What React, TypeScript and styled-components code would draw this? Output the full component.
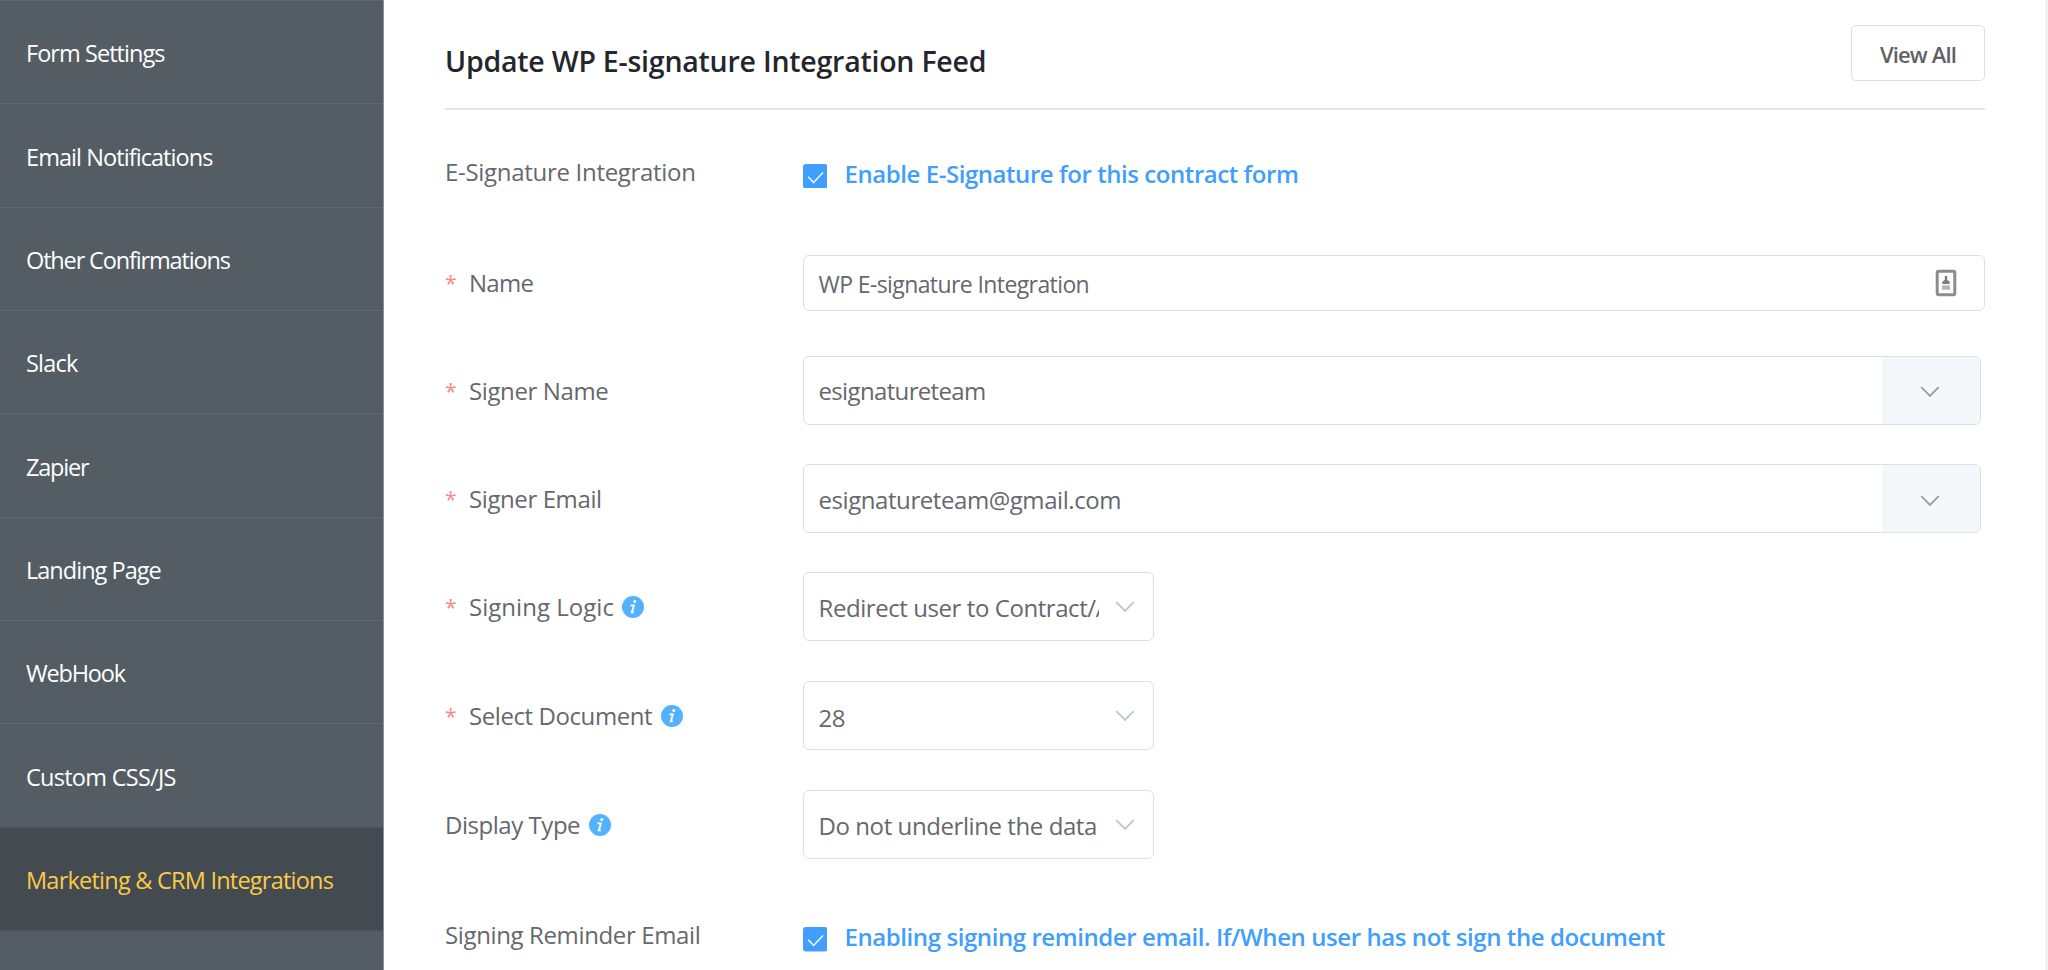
import React from "react";
import styled, { createGlobalStyle } from "styled-components";

const GlobalStyle = createGlobalStyle`
  *, *::before, *::after { box-sizing: border-box; }
  html, body { margin: 0; padding: 0; overflow: hidden; background: #fff; }
  body { font-family: "Open Sans", "Noto Sans", sans-serif; font-size: 24px; color: #66686c; }
`;

const Page = styled.div`
  display: flex;
  width: 2048px;
  height: 970px;
  overflow: hidden;
  background: #fff;
`;

const Sidebar = styled.nav`
  flex: none;
  width: 384px;
  background: #555d64;
  border-right: 1px solid #87929b;
`;

const NavItem = styled.a<{ $active?: boolean; $plain?: boolean }>`
  display: flex;
  align-items: center;
  height: 103.35px;
  padding: 2px 0 0 26px;
  border-top: 1px solid ${(p) => (p.$active || p.$plain ? "#4d555b" : "#616970")};
  background: ${(p) => (p.$active ? "#444b50" : "transparent")};
  color: ${(p) => (p.$active ? "#fcca46" : "#fff")};
  font-size: 23.5px;
  white-space: nowrap;
`;

const Main = styled.main`
  flex: 1;
  padding: 0 60px 0 61px;
  border-right: 3px solid #f1f1f1;
`;

const Header = styled.header`
  display: flex;
  justify-content: space-between;
  align-items: flex-start;
  height: 110px;
  padding-top: 25px;
  border-bottom: 2px solid #e3e3e5;
`;

const Title = styled.h2`
  margin: 0;
  padding-top: 15.5px;
  line-height: 40px;
  font-size: 28.5px;
  font-weight: 600;
  color: #23272c;
  white-space: nowrap;
`;

const Button = styled.button`
  width: 134px;
  height: 56px;
  padding: 1px 0 0;
  border: 1px solid #dcdfe6;
  border-radius: 5px;
  background: #fff;
  color: #606266;
  font: 600 22px/1 "Open Sans", "Noto Sans", sans-serif;
`;

const Form = styled.form`
  display: flex;
  flex-direction: column;
`;

const Row = styled.div<{ $h: number; $gap: number }>`
  display: grid;
  grid-template-columns: 357.5px 1fr;
  grid-template-rows: 100%;
  align-items: center;
  height: ${(p) => p.$h}px;
  margin-top: ${(p) => p.$gap}px;
`;

const Label = styled.label<{ $lift?: number }>`
  display: flex;
  align-items: center;
  padding-bottom: ${(p) => p.$lift ?? 0}px;
  line-height: 34px;
  white-space: nowrap;
`;

const Star = styled.span`
  width: 24px;
  color: #f78989;
  font-size: 21px;
`;

const Track = styled.span<{ $ls: number }>`
  letter-spacing: ${(p) => p.$ls}px;
`;

const InfoIcon = styled.svg`
  width: 22px;
  height: 22px;
  margin-left: 8.5px;
`;

const Check = styled.div`
  display: flex;
  align-items: center;
  color: #409eff;
  font-weight: 600;
  white-space: nowrap;
`;

const CheckText = styled.span`
  margin-left: 17.5px;
  line-height: 34px;
  padding-bottom: 4px;
`;

const Field = styled.div<{ $w: string }>`
  display: flex;
  width: ${(p) => p.$w};
  height: 100%;
  border: 1px solid #dcdfe6;
  border-radius: 6px;
  overflow: hidden;
  background: #fff;
  padding-left: 15px;
`;

const Value = styled.div<{ $drop?: number; $size?: number }>`
  flex: 1;
  align-self: center;
  overflow: hidden;
  line-height: 34px;
  font-size: ${(p) => p.$size ?? 24}px;
  padding-top: ${(p) => p.$drop ?? 0}px;
  white-space: nowrap;
`;

const Append = styled.div<{ $drop?: number }>`
  display: flex;
  align-items: center;
  justify-content: center;
  width: 98px;
  padding: ${(p) => p.$drop ?? 0}px 2px 0 0;
  background: #f5f7fa;
`;

const Suffix = styled.div<{ $w: number }>`
  display: flex;
  align-items: center;
  justify-content: center;
  flex: none;
  width: ${(p) => p.$w}px;
  padding-right: 2px;
`;

const Info = () => (
  <InfoIcon viewBox="0 0 22 22">
    <circle cx="11" cy="11" r="11" fill="#53b2ff" />
    <circle cx="12.8" cy="5.4" r="1.5" fill="#fff" />
    <path d="M8.4 9.4h3.4L9.9 16.4h1.9" fill="none" stroke="#fff" strokeWidth="1.9" />
  </InfoIcon>
);

const Chevron = ({ color }: { color: string }) => (
  <svg width="20" height="12" viewBox="0 0 20 12" fill="none">
    <path d="M1.3 1.2 10 10l8.7-8.8" stroke={color} strokeWidth="1.8" />
  </svg>
);

const CheckBox = () => (
  <svg width="24.5" height="24.5" viewBox="0 0 24.5 24.5">
    <rect width="24.5" height="24.5" rx="3" fill="#409eff" />
    <path d="M5.2 12.8 10.6 18.4 20 8.4" fill="none" stroke="#fff" strokeWidth="1.4" />
  </svg>
);

const AutofillIcon = () => (
  <svg width="22" height="28" viewBox="0 0 22 28">
    <rect x="2.2" y="2.2" width="17.6" height="23.6" rx="1.5" fill="#fdfdfd" stroke="#8c8c8c" strokeWidth="3" />
    <path d="M9.8 7h2.4v4l2.4 1.4v2.6H7.4v-2.6L9.8 11z" fill="#7b7b7b" />
    <rect x="7" y="16.4" width="8" height="4.3" fill="#b4b4b4" />
  </svg>
);

type NavEntry = { text: string; ls: number; active?: boolean };

const nav: NavEntry[] = [
  { text: "Form Settings", ls: -0.95 },
  { text: "Email Notifications", ls: -0.93 },
  { text: "Other Confirmations", ls: -1.15 },
  { text: "Slack", ls: -0.8 },
  { text: "Zapier", ls: -1.2 },
  { text: "Landing Page", ls: -0.98 },
  { text: "WebHook", ls: -1.2 },
  { text: "Custom CSS/JS", ls: -0.73 },
  { text: "Marketing & CRM Integrations", ls: -0.77, active: true },
];

export default function App() {
  return (
    <>
      <GlobalStyle />
      <Page>
        <Sidebar>
          {nav.map((n) => (
            <NavItem key={n.text} $active={n.active}>
              <Track $ls={n.ls}>{n.text}</Track>
            </NavItem>
          ))}
          <NavItem $plain />
        </Sidebar>
        <Main>
          <Header>
            <Title><Track $ls={-0.23}>Update WP E-signature Integration Feed</Track></Title>
            <Button type="button"><Track $ls={-0.85}>View All</Track></Button>
          </Header>
          <Form>
            <Row $h={24.5} $gap={53.5}>
              <Label $lift={8}><Track $ls={-0.3}>E-Signature Integration</Track></Label>
              <Check>
                <CheckBox />
                <CheckText><Track $ls={-0.44}>Enable E-Signature for this contract form</Track></CheckText>
              </Check>
            </Row>
            <Row $h={56} $gap={67}>
              <Label><Star>*</Star><Track $ls={-0.7}>Name</Track></Label>
              <Field $w="100%">
                <Value $size={23} $drop={1}><Track $ls={-0.6}>WP E-signature Integration</Track></Value>
                <Suffix $w={74}><AutofillIcon /></Suffix>
              </Field>
            </Row>
            <Row $h={69} $gap={45}>
              <Label><Star>*</Star><Track $ls={-0.38}>Signer Name</Track></Label>
              <Field $w="1178px">
                <Value><Track $ls={-0.65}>esignatureteam</Track></Value>
                <Append $drop={2}><Chevron color="#9a9da3" /></Append>
              </Field>
            </Row>
            <Row $h={69} $gap={39}>
              <Label><Star>*</Star><Track $ls={-0.4}>Signer Email</Track></Label>
              <Field $w="1178px">
                <Value $drop={2}><Track $ls={-0.43}>esignatureteam@gmail.com</Track></Value>
                <Append $drop={4}><Chevron color="#9a9da3" /></Append>
              </Field>
            </Row>
            <Row $h={69} $gap={39}>
              <Label><Star>*</Star><Track $ls={0.03}>Signing Logic</Track><Info /></Label>
              <Field $w="351px">
                <Value $drop={3}><Track $ls={-0.43}>Redirect user to Contract/Agreement</Track></Value>
                <Suffix $w={54}><Chevron color="#c0c4cc" /></Suffix>
              </Field>
            </Row>
            <Row $h={69} $gap={40}>
              <Label><Star>*</Star><Track $ls={-0.42}>Select Document</Track><Info /></Label>
              <Field $w="351px">
                <Value $drop={4}><Track $ls={-0.4}>28</Track></Value>
                <Suffix $w={54}><Chevron color="#c0c4cc" /></Suffix>
              </Field>
            </Row>
            <Row $h={69} $gap={40}>
              <Label><Track $ls={-0.46}>Display Type</Track><Info /></Label>
              <Field $w="351px">
                <Value $drop={2}><Track $ls={-0.42}>Do not underline the data</Track></Value>
                <Suffix $w={54}><Chevron color="#c0c4cc" /></Suffix>
              </Field>
            </Row>
            <Row $h={24.5} $gap={68}>
              <Label $lift={9}><Track $ls={-0.37}>Signing Reminder Email</Track></Label>
              <Check>
                <CheckBox />
                <CheckText><Track $ls={-0.42}>Enabling signing reminder email. If/When user has not sign the document</Track></CheckText>
              </Check>
            </Row>
          </Form>
        </Main>
      </Page>
    </>
  );
}
